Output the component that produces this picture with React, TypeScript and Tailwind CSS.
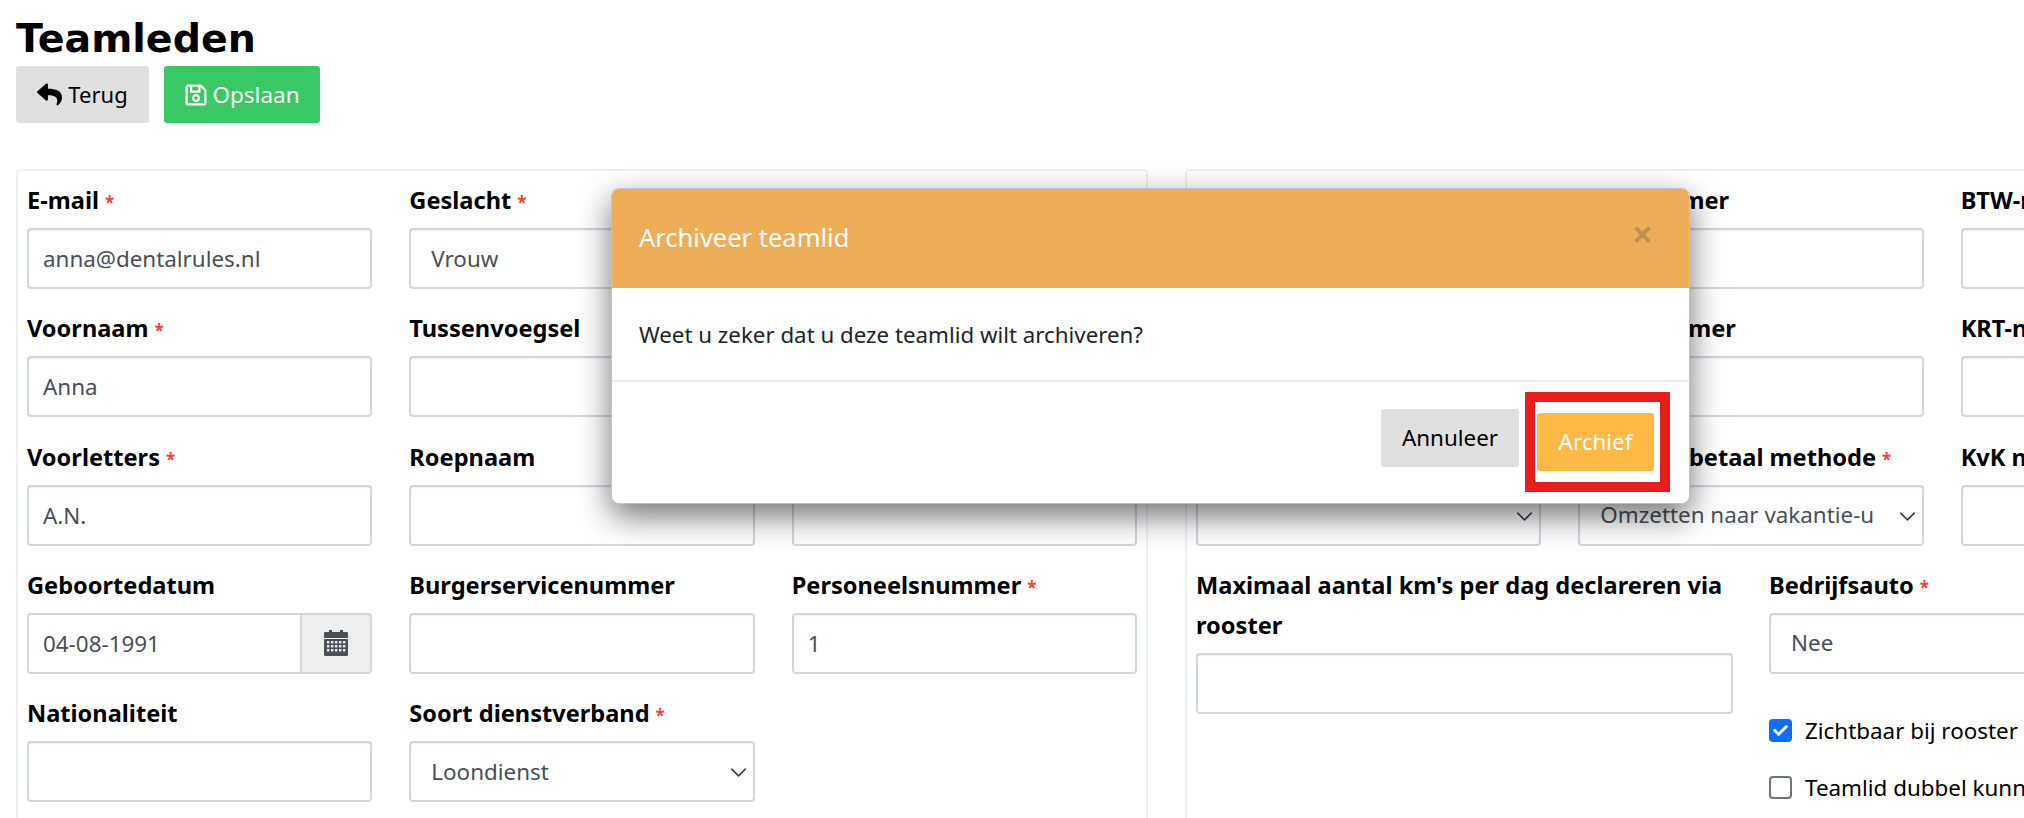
import { ReactNode } from "react";
import { ChevronDown } from "lucide-react";
import { FaCheck, FaRegSave, FaReply } from "react-icons/fa";

const inputClass =
  "block h-[61px] w-full rounded-[4px] border-2 border-[#d3d6dc] bg-white px-[14px] text-[22.4px] text-[#495057] shadow-[inset_0_1px_2px_rgba(0,0,0,0.06)] outline-none";

function Field({
  label,
  required,
  children,
}: {
  label: string;
  required?: boolean;
  children: ReactNode;
}) {
  return (
    <div className="mb-[19.25px]">
      <label className="mb-2 block text-[23.6px] leading-[40px] font-bold text-black">
        {label}
        {required && <span className="ml-[6px] text-[17px] leading-none font-bold text-[#f44336]">*</span>}
      </label>
      {children}
    </div>
  );
}

function TextInput({ value }: { value?: string }) {
  return <input className={inputClass} defaultValue={value} />;
}

function SelectInput({ value, noArrow }: { value?: string; noArrow?: boolean }) {
  return (
    <div className="relative">
      <select
        className={`${inputClass} appearance-none pr-[49px] pl-[20px]`}
        defaultValue={value}
      >
        <option>{value}</option>
      </select>
      {!noArrow && (
        <ChevronDown
          className="absolute top-[18px] right-[3px] text-[#343a40]"
          size={27}
          strokeWidth={1.3}
        />
      )}
    </div>
  );
}

function CalendarIcon() {
  const cols = [4, 8, 12, 16, 20];
  const rows = [11, 15, 19];
  return (
    <svg width="24" height="26" viewBox="0 0 24 26" fill="#495057">
      <rect x="5" y="0" width="3" height="4" />
      <rect x="16" y="0" width="3" height="4" />
      <rect x="0" y="2" width="24" height="6" rx="1" />
      <rect x="0" y="9" width="24" height="17" rx="1" />
      {rows.map((y) =>
        cols.map((x) => <rect key={`${x}-${y}`} x={x - 1} y={y} width="2.4" height="2.4" fill="#eeeeee" />)
      )}
    </svg>
  );
}

function DateInput({ value }: { value: string }) {
  return (
    <div className="flex h-[61px]">
      <input
        className="h-full w-[275px] rounded-l-[4px] border-2 border-[#d3d6dc] px-[14px] text-[22.4px] text-[#495057] outline-none"
        defaultValue={value}
      />
      <div className="flex h-full flex-1 items-center justify-center rounded-r-[4px] border-2 border-l-0 border-[#d3d6dc] bg-[#eeeeee]">
        <CalendarIcon />
      </div>
    </div>
  );
}

function CheckRow({ label, checked }: { label: string; checked?: boolean }) {
  return (
    <div className="mb-[34px] flex h-[23px] items-center gap-[13px] whitespace-nowrap text-[22.4px] text-black">
      {checked ? (
        <span className="flex h-[23px] w-[23px] items-center justify-center rounded-[4px] bg-[#0d6efd] text-white">
          <FaCheck size={15} />
        </span>
      ) : (
        <span className="h-[23px] w-[23px] rounded-[4px] border-2 border-[#70757a] bg-white" />
      )}
      {label}
    </div>
  );
}

function ArchiveModal() {
  return (
    <>
      <div className="absolute top-[188px] left-[611px] flex h-[316px] w-[1079px] flex-col overflow-hidden rounded-[8px] border border-[#c4c4c4] bg-white shadow-[0_12px_32px_rgba(0,0,0,0.55)]">
        <div className="flex h-[99px] items-start justify-between bg-[#eeae58] pt-[30px] pr-[36px] pl-[27px]">
          <h5 className="text-[25.5px] leading-[36px] text-white">Archiveer teamlid</h5>
          <span className="text-[37px] leading-[30px] font-bold text-[#bd9355]">×</span>
        </div>
        <div className="flex h-[94px] items-center border-b-2 border-[#e9ecef] pt-[2px] pl-[27px] text-[22.3px] text-[#212529]">
          Weet u zeker dat u deze teamlid wilt archiveren?
        </div>
        <div className="flex flex-1 items-start justify-end gap-[18px] pt-[27px] pr-[35px]">
          <button className="h-[58px] w-[138px] rounded-[3px] bg-[#e0e0e0] text-[22.4px] text-black">
            Annuleer
          </button>
          <button className="mt-[4px] h-[58px] w-[117px] rounded-[3px] bg-[#ffb944] text-[22.4px] text-white">
            Archief
          </button>
        </div>
      </div>
      {/* annotation from the screenshot */}
      <div className="absolute top-[392px] left-[1525px] h-[100px] w-[145px] border-[10px] border-[#e81e1e]" />
    </>
  );
}

export default function App() {
  return (
    <div className="relative h-[818px] w-[2024px] overflow-hidden bg-white px-4 font-['Noto_Sans',sans-serif]">
      <h1 className="pt-[15px] text-[39.5px] leading-[46px] font-bold text-black font-['DejaVu_Sans',sans-serif]">
        Teamleden
      </h1>
      <div className="mt-[5px] flex gap-[15px]">
        <button className="flex h-[57px] w-[133px] items-center justify-center gap-[6px] rounded-[3px] bg-[#e0e0e0] text-[22px] text-black">
          <FaReply size={25} />
          Terug
        </button>
        <button className="flex h-[57px] w-[156px] items-center justify-center gap-[4px] rounded-[3px] bg-[#38c864] text-[22.5px] text-white">
          <FaRegSave size={24} />
          Opslaan
        </button>
      </div>

      <div className="mt-[46px] flex w-[2400px] items-start gap-[37px]">
        <div className="h-[700px] w-[1132px] shrink-0 rounded-[4px] border-2 border-[#eef0f3] px-[9px] pt-[9px]">
          <div className="grid grid-cols-3 gap-x-[37px]">
            <Field label="E-mail" required>
              <TextInput value="anna@dentalrules.nl" />
            </Field>
            <Field label="Geslacht" required>
              <SelectInput value="Vrouw" noArrow />
            </Field>
            <Field label="Achternaam" required>
              <TextInput />
            </Field>
            <Field label="Voornaam" required>
              <TextInput value="Anna" />
            </Field>
            <Field label="Tussenvoegsel">
              <TextInput />
            </Field>
            <Field label="Meisjesnaam">
              <TextInput />
            </Field>
            <Field label="Voorletters" required>
              <TextInput value="A.N." />
            </Field>
            <Field label="Roepnaam">
              <TextInput />
            </Field>
            <Field label="Telefoon">
              <TextInput />
            </Field>
            <Field label="Geboortedatum">
              <DateInput value="04-08-1991" />
            </Field>
            <Field label="Burgerservicenummer">
              <TextInput />
            </Field>
            <Field label="Personeelsnummer" required>
              <TextInput value="1" />
            </Field>
            <Field label="Nationaliteit">
              <TextInput />
            </Field>
            <Field label="Soort dienstverband" required>
              <SelectInput value="Loondienst" />
            </Field>
          </div>
        </div>

        <div className="h-[700px] w-[1132px] shrink-0 rounded-[4px] border-2 border-[#eef0f3] px-[9px] pt-[9px]">
          <div className="grid grid-cols-3 gap-x-[37px]">
            <Field label="Adres">
              <TextInput />
            </Field>
            <Field label="BIG-nummer">
              <TextInput />
            </Field>
            <Field label="BTW-nummer">
              <TextInput />
            </Field>
            <Field label="Postcode">
              <TextInput />
            </Field>
            <Field label="AGB-nummer">
              <TextInput />
            </Field>
            <Field label="KRT-nummer">
              <TextInput />
            </Field>
            <Field label="Uitbetaling">
              <SelectInput />
            </Field>
            <Field label="Vakantie betaal methode" required>
              <SelectInput value="Omzetten naar vakantie-uren" />
            </Field>
            <Field label="KvK nummer">
              <TextInput />
            </Field>
          </div>
          <div className="grid grid-cols-2 gap-x-[36px]">
            <Field label="Maximaal aantal km's per dag declareren via rooster">
              <TextInput />
            </Field>
            <div>
              <Field label="Bedrijfsauto" required>
                <SelectInput value="Nee" noArrow />
              </Field>
              <div className="pt-[26px]">
                <CheckRow label="Zichtbaar bij rooster" checked />
                <CheckRow label="Teamlid dubbel kunnen inplannen" />
              </div>
            </div>
          </div>
        </div>
      </div>

      <ArchiveModal />
    </div>
  );
}
